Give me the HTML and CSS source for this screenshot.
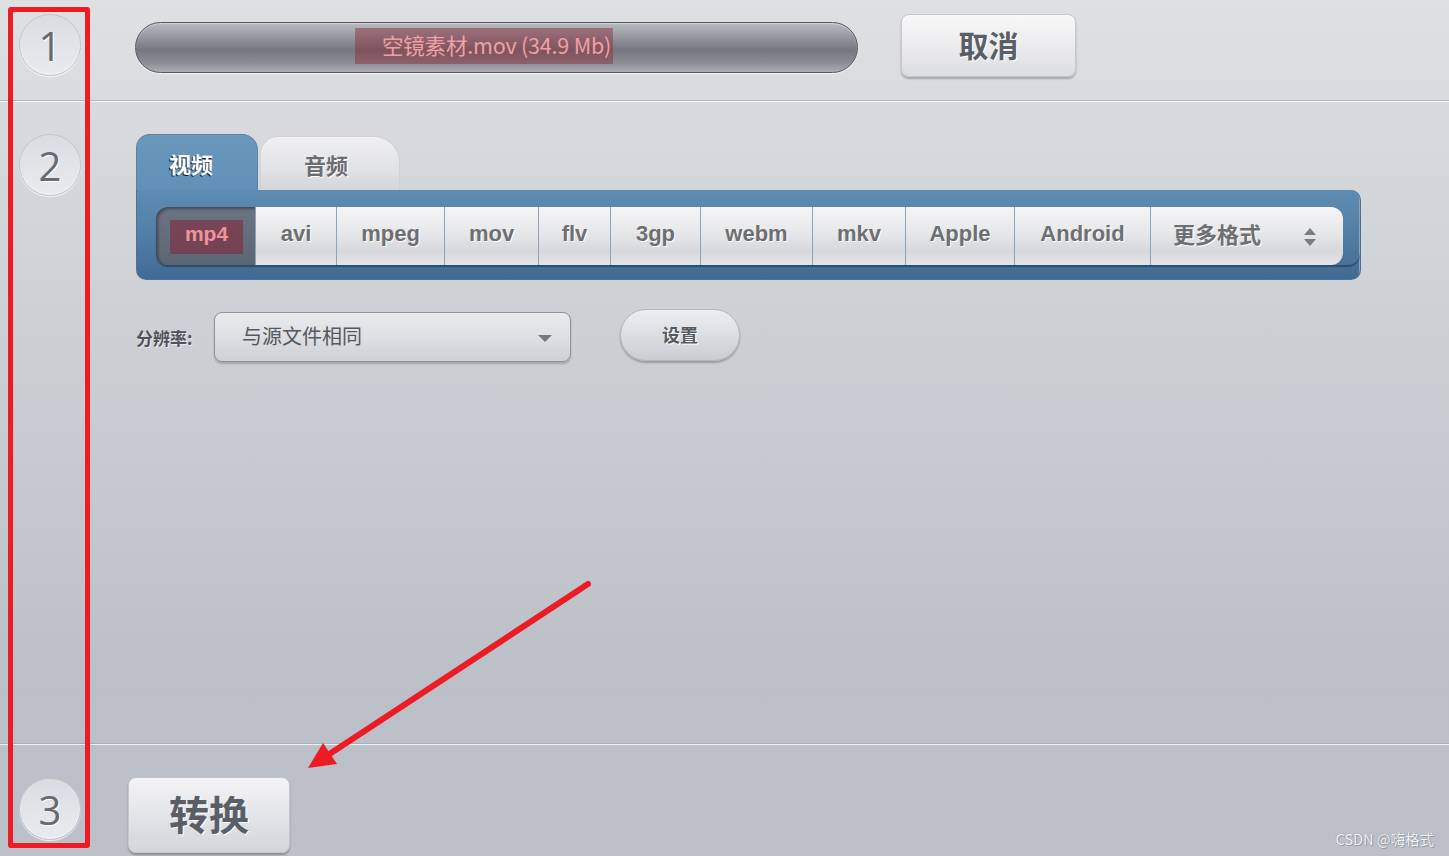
FILE: index.html
```html
<!DOCTYPE html>
<html lang="zh-CN">
  <head>
    <meta charset="UTF-8" />
    <meta name="viewport" content="width=device-width, initial-scale=1.0" />
    <title>视频格式转换</title>
    <link rel="stylesheet" href="styles.css">
  </head>
  <body>
    <div class="page">
      <!-- 第一步：文件 -->
      <section class="row row-file">
        <div class="step"><span class="step-num">1</span></div>
        <div class="file-bar">
          <span class="file-name">空镜素材.mov (34.9 Mb)</span>
        </div>
        <button class="btn btn-cancel">取消</button>
      </section>

      <!-- 第二步：格式 -->
      <section class="row row-format">
        <div class="step"><span class="step-num">2</span></div>
        <div class="format-box">
          <div class="tabs">
            <span class="tab active">视频</span>
            <span class="tab">音频</span>
          </div>
          <div class="format-panel">
            <ul class="format-list">
              <li class="selected"><span class="pick">mp4</span></li>
              <li>avi</li>
              <li>mpeg</li>
              <li>mov</li>
              <li>flv</li>
              <li>3gp</li>
              <li>webm</li>
              <li>mkv</li>
              <li>Apple</li>
              <li>Android</li>
              <li class="more">
                <span class="more-text">更多格式</span>
                <svg class="updown" width="14" height="22" viewBox="0 0 14 22">
                  <path d="M7 2 L13 9 L1 9 Z" fill="#7a7c80" />
                  <path d="M1 13 L13 13 L7 20 Z" fill="#7a7c80" />
                </svg>
              </li>
            </ul>
          </div>
          <div class="option-row">
            <label class="option-label">分辨率:</label>
            <div class="select">
              <span>与源文件相同</span>
              <i class="caret"></i>
            </div>
            <button class="btn btn-setting">设置</button>
          </div>
        </div>
      </section>

      <!-- 第三步：转换 -->
      <section class="row row-convert">
        <div class="step"><span class="step-num">3</span></div>
        <button class="btn btn-convert">转换</button>
      </section>

      <!-- 标注 -->
      <div class="mark-box"></div>
      <svg class="mark-arrow" width="1449" height="856" viewBox="0 0 1449 856">
        <line x1="588" y1="584" x2="328" y2="755" stroke="#ed1c24" stroke-width="6" stroke-linecap="round" />
        <polygon points="308,768 323,743 337,764" fill="#ed1c24" />
      </svg>
      <div class="watermark">CSDN @嗨格式</div>
    </div>
  </body>
</html>
```

FILE: styles.css
```css
body {
  margin: 0;
  padding: 0;
  font-family: "Liberation Sans", "Noto Sans CJK SC", sans-serif;
  background-color: #c8cbd0;
}

.page {
  position: relative;
  width: 1449px;
  height: 856px;
  overflow: hidden;
  background: linear-gradient(180deg, #dfe0e2 0%, #d0d3d7 30%, #bbc0c8 80%, #bcc0c8 100%);
}

.row {
  display: flex;
  align-items: flex-start;
  box-sizing: border-box;
}

.row-file {
  height: 101px;
  padding-top: 14px;
  border-bottom: 1px solid #b3b6bb;
  box-shadow: 0 1px 0 #f3f4f5;
}

.row-format {
  height: 642px;
  padding-top: 32px;
  border-bottom: 1px solid #a9aeb5;
  box-shadow: 0 1px 0 #eef0f2;
  margin-top: 1px;
}

.row-convert {
  padding-top: 32px;
  margin-top: 1px;
}

/* 步骤圆圈 */
.step {
  width: 128px;
  flex: none;
}

.step-num {
  display: flex;
  justify-content: center;
  align-items: center;
  width: 62px;
  height: 62px;
  margin-left: 19px;
  box-sizing: border-box;
  border-radius: 50%;
  border: 1px solid #c3c6cb;
  background: linear-gradient(180deg, #d9dce1 0%, #e3e5e9 60%, #e9eaed 100%);
  box-shadow: 0 1px 1px rgba(255, 255, 255, 0.8), inset 0 -1px 2px rgba(255, 255, 255, 0.6);
  font-family: "Open Sans", "Liberation Sans", sans-serif;
  font-size: 40px;
  font-weight: 400;
  color: #676a70;
  text-shadow: 1px 1px 0 #fff;
}

.row-convert .step-num {
  margin-top: 1px;
}

/* 文件进度条 */
.file-bar {
  width: 723px;
  height: 51px;
  margin-left: 7px;
  margin-top: 8px;
  box-sizing: border-box;
  display: flex;
  align-items: center;
  border: 1px solid #55595f;
  border-radius: 26px;
  background: linear-gradient(180deg, #b8babe 0%, #95989e 28%, #74787f 55%, #8c8f95 82%, #abadb1 100%);
  box-shadow: inset 0 1px 1px rgba(255, 255, 255, 0.4), 0 1px 1px rgba(255, 255, 255, 0.7);
}

.file-name {
  margin-left: 219px;
  margin-top: -4px;
  width: 258px;
  height: 36px;
  box-sizing: border-box;
  padding-left: 27px;
  line-height: 34px;
  white-space: nowrap;
  font-family: "Noto Sans CJK SC", sans-serif;
  font-size: 21.5px;
  letter-spacing: -0.2px;
  color: #eea0a6;
  background-color: rgba(140, 40, 55, 0.45);
}

/* 按钮 */
.btn {
  border: 1px solid #c4c7cc;
  background: linear-gradient(180deg, #f8f8f9 0%, #ececee 50%, #dcdde1 100%);
  box-shadow: 0 2px 2px rgba(0, 0, 0, 0.25);
  font-family: "Noto Sans CJK SC", sans-serif;
  font-weight: 700;
  color: #5a5f67;
  text-shadow: 1px 1px 0 #fff;
  padding: 0;
  cursor: pointer;
}

.btn-cancel {
  width: 175px;
  height: 63px;
  margin-left: 43px;
  padding-bottom: 4px;
  border-radius: 8px;
  font-size: 30px;
}

.btn-setting {
  width: 120px;
  height: 52px;
  margin-left: 49px;
  margin-top: -4px;
  padding-bottom: 3px;
  border-radius: 26px;
  font-size: 18px;
  color: #555a61;
  background: linear-gradient(180deg, #eceef0 0%, #dcdee2 50%, #c9ccd1 100%);
  border-color: #b4b8be;
}

.btn-convert {
  width: 162px;
  height: 76px;
  padding-bottom: 4px;
  border-radius: 8px;
  font-size: 40px;
  background: linear-gradient(180deg, #f4f4f6 0%, #e2e3e6 55%, #d3d5d9 100%);
}

/* 格式选择 */
.format-box {
  margin-left: 8px;
}

.tabs {
  display: flex;
  align-items: flex-end;
  height: 56px;
}

.tab {
  display: flex;
  justify-content: center;
  align-items: center;
  height: 56px;
  box-sizing: border-box;
  font-family: "Noto Sans CJK SC", sans-serif;
  font-weight: 700;
  font-size: 22px;
  color: #6b6d71;
  text-shadow: 1px 1px 0 #fff;
}

.tab.active {
  width: 122px;
  padding-right: 12px;
  border-radius: 14px 16px 0 0;
  background: linear-gradient(180deg, #6b98bd 0%, #6190b6 100%);
  border: 1px solid #5b83a6;
  border-bottom: none;
  color: #fff;
  text-shadow: -1px 1px 0 #1b2430;
}

.tab:not(.active) {
  width: 140px;
  height: 54px;
  margin-left: 2px;
  padding-right: 8px;
  border-radius: 18px 26px 0 0;
  background: linear-gradient(180deg, #f0f0f2 0%, #e1e2e5 60%, #d4d6da 100%);
  border: 1px solid #d0d2d6;
  border-bottom: none;
}

.format-panel {
  width: 1225px;
  height: 90px;
  box-sizing: border-box;
  padding: 17px 0 0 19px;
  border: 1px solid #4f7294;
  border-top: none;
  border-radius: 0 10px 10px 10px;
  background: linear-gradient(180deg, #5f8cb3 0%, #5480a8 45%, #416a91 100%);
  box-shadow: inset -12px 0 0 -11px #89a7c3;
}

.format-list {
  display: grid;
  grid-template-columns: 99px 81px 108px 94px 72px 90px 112px 93px 109px 136px 193px;
  margin: 0;
  padding: 0;
  list-style: none;
  height: 58px;
  border-radius: 12px;
  box-shadow: 0 2px 1px rgba(30, 55, 85, 0.6);
}

.format-list li {
  display: flex;
  justify-content: center;
  align-items: center;
  box-sizing: border-box;
  padding-bottom: 4px;
  border-left: 1px solid #8ca3bb;
  background: linear-gradient(180deg, #f5f5f6 0%, #e6e7e9 45%, #d6d8dc 75%, #e3e4e7 100%);
  font-size: 22px;
  font-weight: 700;
  color: #6e6f72;
  text-shadow: 1px 1px 0 #fff;
}

.format-list li.selected {
  padding-bottom: 0;
  border-left: none;
  border-radius: 12px 0 0 12px;
  background: linear-gradient(180deg, #6b7482 0%, #646d7b 50%, #5d6674 100%);
  box-shadow: inset 2px 2px 3px rgba(0, 0, 0, 0.35);
}

.pick {
  width: 73px;
  height: 34px;
  margin-left: 2px;
  margin-top: 2px;
  padding-bottom: 6px;
  box-sizing: border-box;
  display: flex;
  justify-content: center;
  align-items: center;
  background-color: rgba(130, 40, 60, 0.6);
  color: #ee939b;
  text-shadow: none;
  font-size: 21px;
}

.format-list li.more {
  justify-content: flex-start;
  padding-left: 22px;
  padding-bottom: 0;
  border-radius: 0 12px 12px 0;
}

.more-text {
  font-family: "Noto Sans CJK SC", sans-serif;
  margin-top: -6px;
}

.updown {
  margin-left: 42px;
  margin-top: 2px;
}

/* 分辨率 */
.option-row {
  display: flex;
  align-items: center;
  margin-top: 32px;
}

.option-label {
  width: 78px;
  font-family: "Noto Sans CJK SC", sans-serif;
  font-size: 17px;
  font-weight: 700;
  color: #505358;
  text-shadow: 1px 1px 0 rgba(255, 255, 255, 0.6);
}

.select {
  position: relative;
  display: flex;
  align-items: center;
  width: 357px;
  height: 50px;
  box-sizing: border-box;
  padding-left: 27px;
  padding-bottom: 3px;
  border: 1px solid #8f9297;
  border-radius: 8px;
  background: linear-gradient(180deg, #e9eaec 0%, #dcdee1 55%, #ced0d4 100%);
  box-shadow: 0 2px 2px rgba(0, 0, 0, 0.2);
  font-family: "Noto Sans CJK SC", sans-serif;
  font-size: 20px;
  color: #55585d;
}

.caret {
  position: absolute;
  right: 18px;
  top: 22px;
  width: 0;
  height: 0;
  border-left: 7px solid transparent;
  border-right: 7px solid transparent;
  border-top: 7px solid #75787d;
}

/* 标注 */
.mark-box {
  position: absolute;
  left: 8px;
  top: 7px;
  width: 82px;
  height: 841px;
  box-sizing: border-box;
  border: 5px solid #ed1c24;
  border-radius: 3px;
}

.mark-arrow {
  position: absolute;
  left: 0;
  top: 0;
  pointer-events: none;
}

.watermark {
  position: absolute;
  right: 15px;
  bottom: 7px;
  font-family: "Noto Sans CJK SC", sans-serif;
  font-size: 14.5px;
  color: #f2f3f5;
  text-shadow: 0 0 1px #7c8088, 1px 1px 0 #9aa0a8;
}
```
